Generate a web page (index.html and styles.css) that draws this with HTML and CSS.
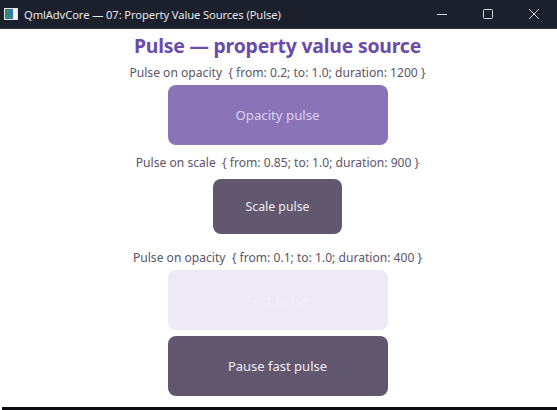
FILE: index.html
```html
<!DOCTYPE html>
<html>
<head>
<meta charset="utf-8">
<link rel="stylesheet" href="styles.css">
</head>
<body>
<div class="window">
  <div class="titlebar">
    <svg class="app-icon" width="14" height="12" viewBox="0 0 14 12">
      <rect x="0" y="0" width="14" height="12" fill="#dfe6ea"/>
      <rect x="1" y="1" width="5" height="10" fill="#2f8a6e"/>
      <rect x="6" y="1" width="3" height="10" fill="#3d74b8"/>
      <rect x="9" y="1" width="4" height="10" fill="#f2f4f6"/>
    </svg>
    <span class="title-text">QmlAdvCore — 07: Property Value Sources (Pulse)</span>
    <div class="controls">
      <svg class="ctl" width="46" height="28" viewBox="0 0 46 28"><line x1="18" y1="14.5" x2="28" y2="14.5" stroke="#d6d8de" stroke-width="1"/></svg>
      <svg class="ctl" width="46" height="28" viewBox="0 0 46 28"><rect x="18.5" y="9.5" width="9" height="9" rx="1" fill="none" stroke="#d6d8de" stroke-width="1"/></svg>
      <svg class="ctl" width="46" height="28" viewBox="0 0 46 28"><path d="M18 9 L28 19 M28 9 L18 19" stroke="#d6d8de" stroke-width="1"/></svg>
    </div>
  </div>
  <div class="content">
    <h1 class="heading">Pulse — property value source</h1>
    <div class="label l1">Pulse on opacity&nbsp; { from: 0.2; to: 1.0; duration: 1200 }</div>
    <div class="btn wide opacity-btn">Opacity pulse</div>
    <div class="label l2">Pulse on scale&nbsp; { from: 0.85; to: 1.0; duration: 900 }</div>
    <div class="scale-slot">
      <div class="btn small dark">Scale pulse</div>
    </div>
    <div class="label l3">Pulse on opacity&nbsp; { from: 0.1; to: 1.0; duration: 400 }</div>
    <div class="btn wide faint">Fast pulse</div>
    <div class="btn wide dark pause">Pause fast pulse</div>
  </div>
  <div class="bottom-edge"></div>
</div>
</body>
</html>
```

FILE: styles.css
```css
html, body {
  margin: 0;
  padding: 0;
  background: #ffffff;
}
.window {
  width: 557px;
  height: 410px;
  display: flex;
  flex-direction: column;
  font-family: "Noto Sans", "Open Sans", sans-serif;
  overflow: hidden;
}
.titlebar {
  height: 28px;
  flex: 0 0 28px;
  background: #1c202c;
  border-bottom: 1px solid #2c3040;
  display: flex;
  align-items: center;
}
.app-icon {
  margin-left: 4px;
  margin-right: 6px;
}
.title-text {
  color: #e6e7ea;
  font-family: "Noto Sans", sans-serif;
  font-size: 11.2px;
  letter-spacing: -0.1px;
}
.controls {
  margin-left: auto;
  display: flex;
}
.ctl {
  display: block;
}
.content {
  flex: 1;
  display: flex;
  flex-direction: column;
  align-items: center;
  padding-top: 5px;
  padding-right: 2px;
}
.heading {
  margin: 0;
  height: 24px;
  line-height: 24px;
  font-size: 19.4px;
  font-weight: 700;
  color: #6a4ba9;
  letter-spacing: -0.2px;
}
.label {
  height: 18px;
  line-height: 18px;
  font-size: 12.1px;
  color: #5b5468;
  white-space: pre;
}
.l1 { margin-top: 6px; }
.l2 { margin-top: 9px; }
.l3 { margin-top: 13px; }
.btn {
  display: flex;
  align-items: center;
  justify-content: center;
  border-radius: 8px;
  font-size: 13.2px;
}
.wide {
  width: 220px;
  height: 60px;
}
.opacity-btn {
  margin-top: 3px;
  background: #8a74b8;
  color: #dcd3f0;
}
.scale-slot {
  margin-top: 4px;
  height: 60px;
  width: 140px;
  display: flex;
  align-items: center;
  justify-content: center;
}
.small {
  width: 129px;
  height: 55px;
  font-size: 12.3px;
}
.dark {
  background: #615870;
  color: #f0ecf6;
}
.faint {
  margin-top: 3px;
  background: #edeaf5;
  color: #f1eff8;
}
.pause {
  margin-top: 6px;
  font-size: 13px;
}
.bottom-edge {
  flex: 0 0 3px;
  height: 3px;
  background: #0c0c10;
  margin-left: 2px;
}
```
